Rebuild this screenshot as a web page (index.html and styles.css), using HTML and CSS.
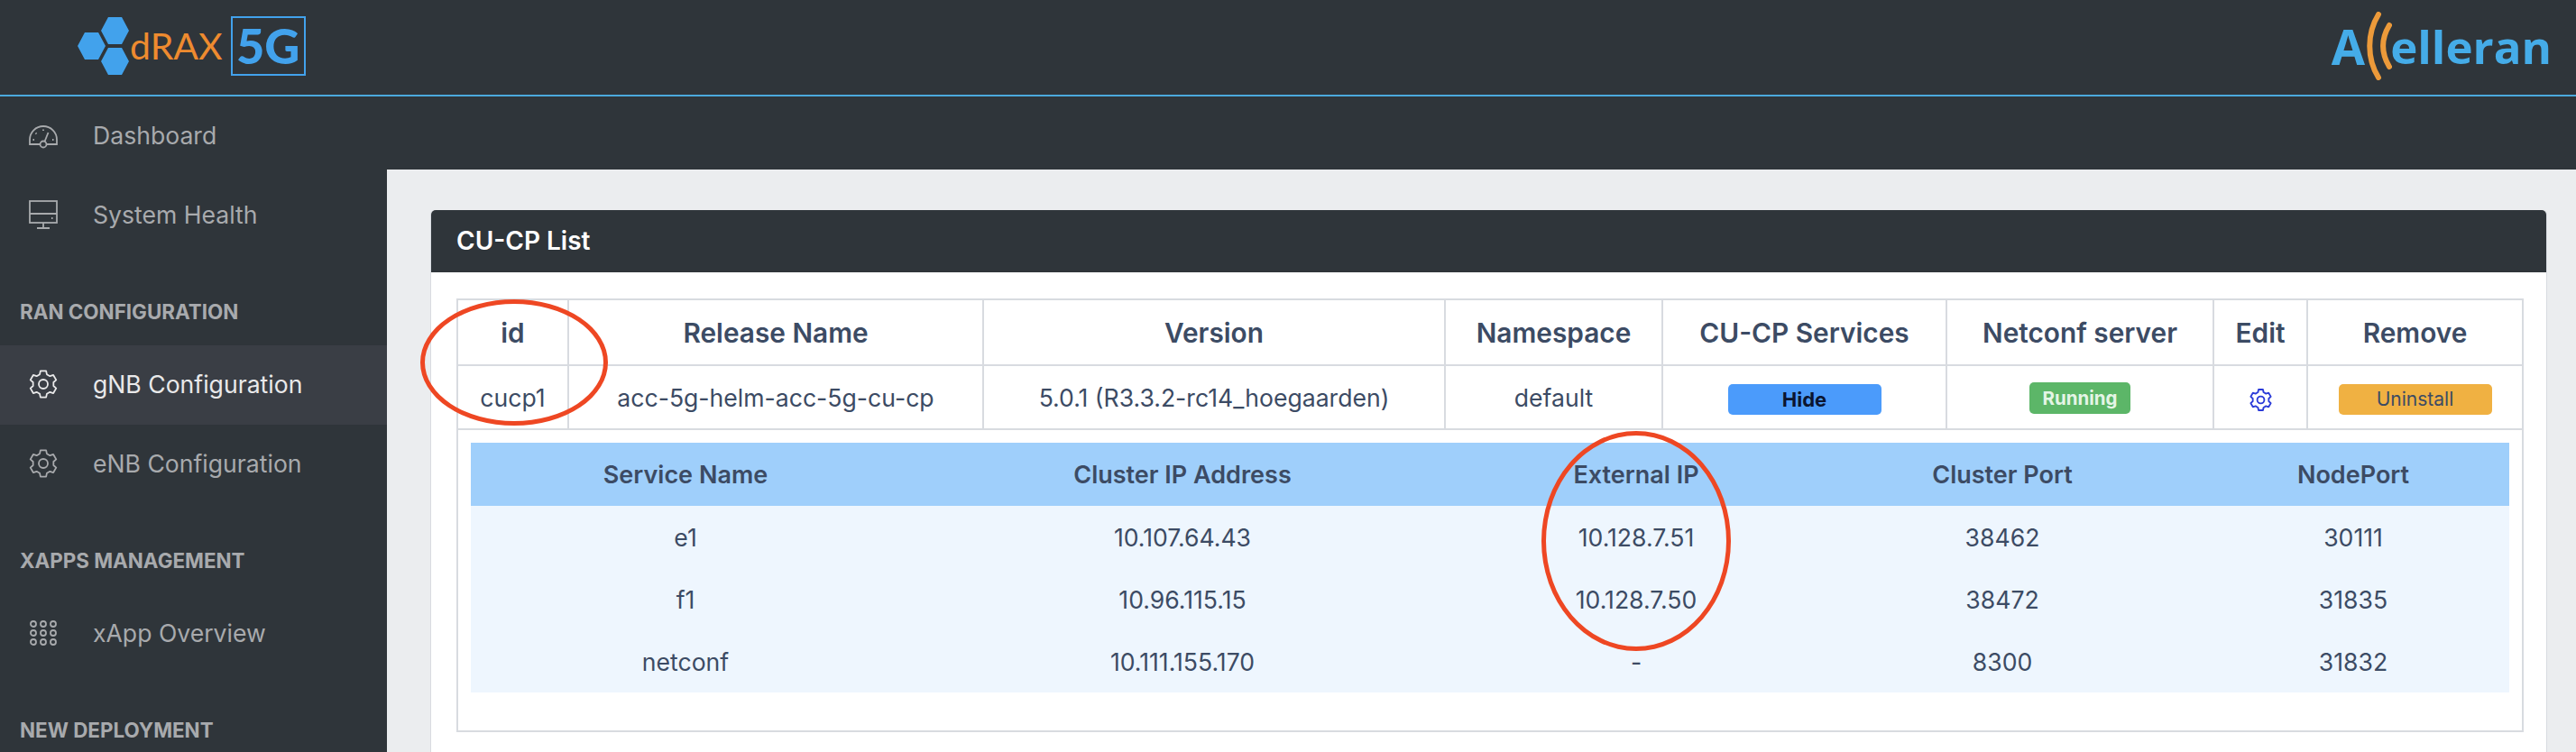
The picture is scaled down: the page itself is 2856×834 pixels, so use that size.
FILE: index.html
```html
<!DOCTYPE html>
<html lang="en">

<head>
  <meta charset="UTF-8">
  <title>dRAX 5G - CU-CP List</title>
  <link rel="stylesheet" href="styles.css">
</head>

<body>
  <!-- shared icons -->
  <svg class="defs" width="0" height="0">
    <symbol id="gear" viewBox="0 0 32 32">
      <path d="M12.07 5.19L12.88 1.33H19.12L19.93 5.19L23.39 7.19L27.15 5.96L30.27 11.36L27.33 14V18L30.27 20.64L27.15 26.04L23.39 24.81L19.93 26.81L19.12 30.67H12.88L12.07 26.81L8.61 24.81L4.85 26.04L1.73 20.64L4.67 18V14L1.73 11.36L4.85 5.96L8.61 7.19Z" fill="none" stroke="currentColor" stroke-linejoin="round"/>
      <circle cx="16" cy="16" r="5" fill="none" stroke="currentColor"/>
    </symbol>
  </svg>

  <header class="topbar">
    <div class="brand">
      <svg class="hexes" viewBox="0 0 57 64">
        <polygon points="0,32 8,17 23,17 31,32 23,47 8,47" />
        <polygon points="26,15 34,0 49,0 57,15 49,30 34,30" />
        <polygon points="26,49 34,34 49,34 57,49 49,64 34,64" />
      </svg>
      <span class="brand-name">dRAX</span>
      <span class="brand-box">5G</span>
    </div>
    <div class="vendor">
      <span class="vendor-a">A</span>
      <svg class="waves" viewBox="0 0 30 76">
        <path d="M15 3C2 24 2 52 15 73" />
        <path d="M27 15C18 30 18 46 27 61" />
      </svg>
      <span class="vendor-rest">elleran</span>
    </div>
  </header>

  <div class="layout">
    <nav class="sidebar">
      <a class="nav-item">
        <svg class="nav-icon" viewBox="0 0 32 32">
          <path d="M12.5 26H1V21C1 12.7 7.7 6 16 6S31 12.7 31 21V26H19.5" />
          <circle cx="16" cy="26" r="3.5" />
          <path d="M17.5 23L21.5 13M16 9.5V11M7.5 13.5L8.5 14.5M4.5 21H6M26 21H27.5" />
        </svg>
        Dashboard
      </a>
      <a class="nav-item">
        <svg class="nav-icon" viewBox="0 0 32 32">
          <rect x="1" y="1" width="30" height="24" />
          <path d="M1 15H31M16 25V30M9 31H23M25 20H26.5" />
        </svg>
        System Health
      </a>

      <div class="nav-title">RAN CONFIGURATION</div>
      <a class="nav-item active">
        <svg class="nav-icon"><use href="#gear" /></svg>
        gNB Configuration
      </a>
      <a class="nav-item">
        <svg class="nav-icon"><use href="#gear" /></svg>
        eNB Configuration
      </a>

      <div class="nav-title">XAPPS MANAGEMENT</div>
      <a class="nav-item">
        <svg class="nav-icon" viewBox="0 0 32 32">
          <circle cx="5" cy="6" r="3" /><circle cx="16" cy="6" r="3" /><circle cx="27" cy="6" r="3" />
          <circle cx="5" cy="16" r="3" /><circle cx="16" cy="16" r="3" /><circle cx="27" cy="16" r="3" />
          <circle cx="5" cy="26" r="3" /><circle cx="16" cy="26" r="3" /><circle cx="27" cy="26" r="3" />
        </svg>
        xApp Overview
      </a>

      <div class="nav-title">NEW DEPLOYMENT</div>
    </nav>

    <main class="main">
      <div class="subheader"></div>
      <div class="content">
        <section class="card">
          <h2 class="card-header">CU-CP List</h2>
          <div class="card-body">
            <table class="list">
              <colgroup>
                <col class="c-id"><col class="c-release"><col class="c-version"><col class="c-ns">
                <col class="c-services"><col class="c-netconf"><col class="c-edit"><col class="c-remove">
              </colgroup>
              <thead>
                <tr>
                  <th>id</th>
                  <th>Release Name</th>
                  <th>Version</th>
                  <th>Namespace</th>
                  <th>CU-CP Services</th>
                  <th>Netconf server</th>
                  <th>Edit</th>
                  <th>Remove</th>
                </tr>
              </thead>
              <tbody>
                <tr class="row">
                  <td>cucp1</td>
                  <td>acc-5g-helm-acc-5g-cu-cp</td>
                  <td>5.0.1 (R3.3.2-rc14_hoegaarden)</td>
                  <td>default</td>
                  <td><span class="btn btn-hide">Hide</span></td>
                  <td><span class="badge">Running</span></td>
                  <td><svg class="edit-icon"><use href="#gear" /></svg></td>
                  <td><span class="btn btn-uninstall">Uninstall</span></td>
                </tr>
                <tr>
                  <td class="nested" colspan="8">
                    <table class="services">
                      <colgroup>
                        <col class="s-name"><col class="s-cluster"><col class="s-ext"><col class="s-port"><col class="s-node">
                      </colgroup>
                      <thead>
                        <tr>
                          <th>Service Name</th>
                          <th>Cluster IP Address</th>
                          <th>External IP</th>
                          <th>Cluster Port</th>
                          <th>NodePort</th>
                        </tr>
                      </thead>
                      <tbody>
                        <tr>
                          <td>e1</td>
                          <td>10.107.64.43</td>
                          <td>10.128.7.51</td>
                          <td>38462</td>
                          <td>30111</td>
                        </tr>
                        <tr>
                          <td>f1</td>
                          <td>10.96.115.15</td>
                          <td>10.128.7.50</td>
                          <td>38472</td>
                          <td>31835</td>
                        </tr>
                        <tr>
                          <td>netconf</td>
                          <td>10.111.155.170</td>
                          <td>-</td>
                          <td>8300</td>
                          <td>31832</td>
                        </tr>
                      </tbody>
                    </table>
                  </td>
                </tr>
              </tbody>
            </table>
          </div>
        </section>
      </div>
    </main>
  </div>

  <!-- hand drawn marks on top of the screenshot -->
  <div class="mark mark-id"></div>
  <div class="mark mark-ip"></div>
</body>

</html>
```
FILE: styles.css
```css
html, body {
  margin: 0;
  height: 100%;
  overflow: hidden;
}
body {
  position: relative;
  font-family: Inter, "Liberation Sans", sans-serif;
  font-size: 26.6px;
  color: #3c4b64;
  background: #ebedef;
}
.defs {
  position: absolute;
}

/* top bar */
.topbar {
  display: flex;
  justify-content: space-between;
  height: 105px;
  background: #2f353a;
  border-bottom: 2px solid #4ba9dc;
}
.brand {
  display: flex;
  align-items: center;
  padding-left: 86px;
  height: 101px;
}
.hexes {
  width: 57px;
  height: 64px;
  fill: #42a2ec;
}
.brand-name {
  margin-left: 1px;
  font-family: Lato, sans-serif;
  font-size: 41px;
  color: #ee8b2f;
}
.brand-box {
  margin-left: 9px;
  width: 79px;
  height: 62px;
  border: 2px solid #42a2ec;
  text-align: center;
  font-family: Lato, sans-serif;
  font-weight: 900;
  font-size: 54px;
  line-height: 62px;
  color: #42a2ec;
}
.vendor {
  display: flex;
  align-items: center;
  padding-right: 27px;
  height: 102px;
  font-family: "Open Sans", sans-serif;
  font-weight: 700;
  color: #45ace8;
}
.vendor-a {
  font-size: 54px;
}
.waves {
  width: 30px;
  height: 76px;
  fill: none;
  stroke: #ec9a3a;
  stroke-width: 6;
  stroke-linecap: round;
}
.vendor-rest {
  margin-left: -2px;
  font-size: 51px;
}

/* layout */
.layout {
  display: flex;
  height: 727px;
}
.sidebar {
  flex: none;
  width: 429px;
  background: #2f353a;
}
.nav-item {
  display: flex;
  align-items: center;
  box-sizing: border-box;
  height: 88px;
  padding: 0 0 2px 32px;
  color: #a8aaad;
}
.nav-item.active {
  background: #3a3e45;
  color: #e9e9ea;
}
.nav-icon {
  flex: none;
  width: 32px;
  height: 32px;
  margin-right: 39px;
  fill: none;
  stroke: currentColor;
  stroke-width: 1.8;
}
.nav-title {
  height: 36px;
  margin: 45px 0 19px;
  padding-left: 22px;
  font-size: 22.4px;
  font-weight: 700;
  line-height: 36px;
  color: #a8aaad;
}

.main {
  flex: 1;
  min-width: 0;
}
.subheader {
  height: 81px;
  background: #2f353a;
}
.content {
  padding: 45px 32px 0 48px;
}

/* card */
.card {
  background: #fff;
  border-radius: 5px;
  border: 1px solid #d8dbe0;
  border-top: 0;
  height: 620px;
}
.card-header {
  margin: 0;
  height: 69px;
  padding-left: 28px;
  border-radius: 5px 5px 0 0;
  background: #2f353a;
  color: #fff;
  font-size: 28px;
  font-weight: 600;
  line-height: 69px;
}
.card-body {
  padding: 29px 28px 0 28px;
}

/* tables */
table {
  width: 100%;
  table-layout: fixed;
  border-collapse: collapse;
  text-align: center;
}
.list > thead > tr {
  height: 73px;
}
.list > thead th,
.list > tbody > .row > td,
.nested {
  border: 2px solid #d8dbe0;
}
.list > tbody > .row {
  height: 71px;
}
.list th, .list td {
  padding: 0;
}
.list > thead th {
  font-size: 29.8px;
  font-weight: 600;
}
.services th {
  font-size: 27px;
  font-weight: 600;
}
.c-id { width: 123px; }
.c-release { width: 460px; }
.c-version { width: 512px; }
.c-ns { width: 241px; }
.c-services { width: 315px; }
.c-netconf { width: 296px; }
.c-edit { width: 104px; }
.c-remove { width: 239px; }

.list > tbody > tr > .nested {
  padding: 14px 14px 42px 14px;
}
.services > thead > tr {
  height: 70px;
  background: #9fcffb;
}
.services > tbody > tr {
  height: 69px;
  background: #eef6fe;
}
.s-name { width: 476px; }
.s-cluster { width: 626px; }
.s-ext { width: 380px; }
.s-port { width: 432px; }
.s-node { width: 346px; }

/* controls */
.btn, .badge {
  display: inline-block;
  border-radius: 5px;
  vertical-align: middle;
}
.btn {
  width: 170px;
  height: 34px;
  margin-top: 4px;
  font-size: 22px;
  line-height: 34px;
}
.btn-hide {
  background: #4b9bfb;
  color: #0b1530;
  font-weight: 700;
}
.btn-uninstall {
  background: #f0b142;
  color: #3c4b64;
  font-size: 21px;
}
.badge {
  width: 112px;
  height: 35px;
  background: #5cb668;
  color: #e4f5e6;
  font-size: 20.5px;
  font-weight: 700;
  line-height: 35px;
}
.edit-icon {
  width: 25px;
  height: 25px;
  color: #2b3bd8;
  vertical-align: middle;
  stroke-width: 2.4;
}

/* red circles drawn over the table */
.mark {
  position: absolute;
  box-sizing: border-box;
  border: 5px solid #ee4723;
  border-radius: 50%;
}
.mark-id {
  left: 466px;
  top: 332px;
  width: 208px;
  height: 140px;
}
.mark-ip {
  left: 1709px;
  top: 478px;
  width: 210px;
  height: 244px;
}
```
